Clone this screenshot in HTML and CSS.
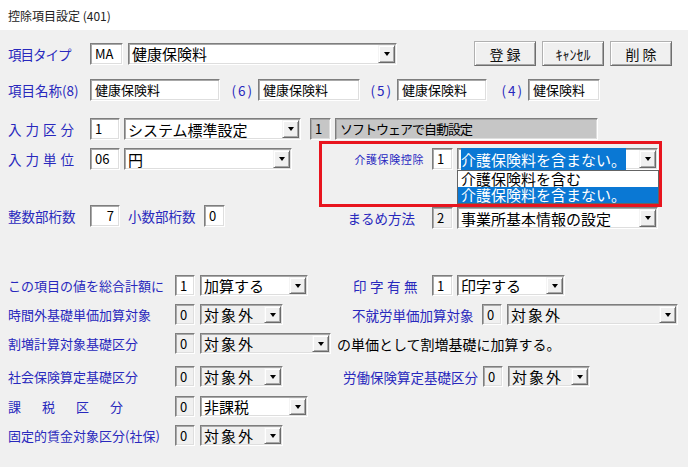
FILE: index.html
```html
<!DOCTYPE html>
<html lang="ja">
<head>
<meta charset="utf-8">
<title>控除項目設定</title>
<link rel="stylesheet" href="styles.css">
</head>
<body>
<div class="title">控除項目設定 (401)</div>
<div class="panel">

  <div class="row row-type">
    <div class="lbl head type-lbl">項目タイプ</div>
    <div class="fld code-ma">MA</div>
    <div class="combo type-combo"><span class="val">健康保険料</span><span class="arrow"></span></div>
    <div class="btns">
      <div class="btn">登 録</div>
      <div class="btn">ｷｬﾝｾﾙ</div>
      <div class="btn">削 除</div>
    </div>
  </div>

  <div class="row row-name">
    <div class="lbl head">項目名称(8)</div>
    <div class="fld name name8">健康保険料</div>
    <div class="lbl paren paren6">(6)</div>
    <div class="fld name name6">健康保険料</div>
    <div class="lbl paren paren5">(5)</div>
    <div class="fld name name5">健康保険料</div>
    <div class="lbl paren paren4">(4)</div>
    <div class="fld name name4">健保険料</div>
  </div>

  <div class="row row-input">
    <div class="lbl head spaced">入力区分</div>
    <div class="fld code">1</div>
    <div class="combo kubun-combo"><span class="val">システム標準設定</span><span class="arrow"></span></div>
    <div class="fld grey grey-code">1</div>
    <div class="fld grey grey-text">ソフトウェアで自動設定</div>
  </div>

  <div class="mid">
    <div class="mid-left">
      <div class="row row-unit">
        <div class="lbl head spaced">入力単位</div>
        <div class="fld code">06</div>
        <div class="combo unit-combo"><span class="val">円</span><span class="arrow"></span></div>
      </div>
      <div class="row row-digits">
        <div class="lbl head">整数部桁数</div>
        <div class="fld code num">7</div>
        <div class="lbl dec-lbl">小数部桁数</div>
        <div class="fld small">0</div>
      </div>
    </div>
    <div class="mid-right">
      <div class="highlight">
        <div class="row row-kaigo">
          <div class="lbl kaigo-lbl">介護保険控除</div>
          <div class="fld small">1</div>
          <div class="combo wide-combo">
            <span class="val"><span class="sel">介護保険料を含まない。</span></span><span class="arrow"></span>
            <div class="droplist">
              <div class="opt">介護保険料を含む</div>
              <div class="opt active">介護保険料を含まない。</div>
            </div>
          </div>
        </div>
      </div>
      <div class="row row-round">
        <div class="lbl round-lbl">まるめ方法</div>
        <div class="fld small off">2</div>
        <div class="combo wide-combo"><span class="val">事業所基本情報の設定</span><span class="arrow"></span></div>
      </div>
    </div>
  </div>

  <div class="row low row-total">
    <div class="lbl long">この項目の値を総合計額に</div>
    <div class="fld tiny">1</div>
    <div class="combo c108"><span class="val">加算する</span><span class="arrow"></span></div>
    <div class="lbl inji-lbl">印字有無</div>
    <div class="fld small">1</div>
    <div class="combo c108 inji-combo"><span class="val">印字する</span><span class="arrow"></span></div>
  </div>

  <div class="row low row-overtime">
    <div class="lbl long">時間外基礎単価加算対象</div>
    <div class="fld tiny off">0</div>
    <div class="combo off c83"><span class="val sp">対象外</span><span class="arrow"></span></div>
    <div class="lbl fushu-lbl">不就労単価加算対象</div>
    <div class="fld tiny off">0</div>
    <div class="combo off fushu-combo"><span class="val sp">対象外</span><span class="arrow"></span></div>
  </div>

  <div class="row low row-premium">
    <div class="lbl long">割増計算対象基礎区分</div>
    <div class="fld tiny off">0</div>
    <div class="combo off c131"><span class="val sp">対象外</span><span class="arrow"></span></div>
    <div class="note">の単価として割増基礎に加算する。</div>
  </div>

  <div class="row low row-social">
    <div class="lbl long">社会保険算定基礎区分</div>
    <div class="fld tiny off">0</div>
    <div class="combo off c83"><span class="val sp">対象外</span><span class="arrow"></span></div>
    <div class="lbl labor-lbl">労働保険算定基礎区分</div>
    <div class="fld tiny off">0</div>
    <div class="combo off labor-combo"><span class="val sp">対象外</span><span class="arrow"></span></div>
  </div>

  <div class="row low row-tax">
    <div class="lbl long tax-lbl">課税区分</div>
    <div class="fld tiny off">0</div>
    <div class="combo c108"><span class="val">非課税</span><span class="arrow"></span></div>
  </div>

  <div class="row low row-fixed">
    <div class="lbl long">固定的賃金対象区分(社保)</div>
    <div class="fld tiny off">0</div>
    <div class="combo off c83"><span class="val sp">対象外</span><span class="arrow"></span></div>
  </div>

</div>
</body>
</html>
```
FILE: styles.css
```css
* { box-sizing: border-box; }

html, body {
  margin: 0;
  padding: 0;
}

body {
  width: 688px;
  height: 467px;
  overflow: hidden;
  background: #f0f0f0;
  color: #000;
  font-family: "Noto Sans CJK JP", "Noto Sans", sans-serif;
}

.title {
  height: 30px;
  background: #fff;
  padding-left: 8px;
  font-size: 12px;
  line-height: 32px;
  color: #222;
}

.panel {
  padding: 11px 0 0 8px;
}

.row {
  display: flex;
  align-items: center;
  height: 22px;
}

.lbl {
  flex: none;
  color: #2828bd;
  font-size: 13.5px;
  line-height: 18px;
  white-space: nowrap;
}

.head { width: 82px; }
.type-lbl { letter-spacing: -1px; }
.spaced { letter-spacing: 4px; }

/* sunken edit boxes */
.fld {
  flex: none;
  height: 22px;
  display: flex;
  align-items: center;
  padding-left: 4px;
  background: #fff;
  border-top: 1px solid #7e7e7e;
  border-left: 1px solid #7e7e7e;
  border-right: 1px solid #fff;
  border-bottom: 1px solid #fff;
  box-shadow: inset 1px 1px 0 #a8a8a8, inset -1px -1px 0 #dedede;
  font-size: 13px;
  line-height: 18px;
  white-space: nowrap;
}

.fld.off { background: #f0f0f0; }
.fld.num { justify-content: flex-end; padding-right: 5px; }

.code-ma { width: 33px; }
.code { width: 30px; }
.small { width: 21px; }
.tiny { width: 20px; }

.name { font-size: 13px; }
.name8 { width: 130px; }
.name6 { width: 102px; }
.name5 { width: 90px; }
.name4 { width: 72px; }

.paren {
  text-align: right;
  padding-right: 4px;
  letter-spacing: 2px;
}
.paren6 { width: 38px; }
.paren5 { width: 37px; }
.paren4 { width: 41px; }

.grey {
  background: #c6c6c6;
  font-size: 13px;
}
.grey-code { width: 21px; margin-left: 9px; }
.grey-text { width: 263px; margin-left: 4px; letter-spacing: -1px; }

/* combo boxes */
.combo {
  flex: none;
  position: relative;
  height: 22px;
  display: flex;
  align-items: center;
  background: #fff;
  border-top: 1px solid #7e7e7e;
  border-left: 1px solid #7e7e7e;
  border-right: 1px solid #fff;
  border-bottom: 1px solid #fff;
  box-shadow: inset 1px 1px 0 #a8a8a8, inset -1px -1px 0 #dedede;
}
.combo.off { background: #f0f0f0; }

.val {
  flex: 1;
  min-width: 0;
  padding-left: 3px;
  font-size: 15px;
  line-height: 19px;
  white-space: nowrap;
}
.val.sp { letter-spacing: 2px; }

.arrow {
  flex: none;
  width: 17px;
  height: 18px;
  margin-right: 1px;
  display: flex;
  align-items: center;
  justify-content: center;
  background: #f0f0f0;
  border-top: 1px solid #f4f4f4;
  border-left: 1px solid #f4f4f4;
  border-right: 1px solid #6a6a6a;
  border-bottom: 1px solid #6a6a6a;
  box-shadow: inset 1px 1px 0 #fff, inset -1px -1px 0 #a8a8a8;
}
.arrow::after {
  content: "";
  width: 0;
  height: 0;
  border-left: 3.5px solid transparent;
  border-right: 3.5px solid transparent;
  border-top: 4px solid #000;
}

.type-combo { width: 269px; margin-left: 5px; }
.kubun-combo { width: 177px; margin-left: 4px; }
.unit-combo { width: 168px; margin-left: 4px; }
.wide-combo { width: 201px; margin-left: 4px; }
.c108 { width: 108px; margin-left: 5px; }
.c83 { width: 83px; margin-left: 5px; }
.c131 { width: 131px; margin-left: 5px; }
.inji-combo { margin-left: 4px; }
.fushu-combo { width: 171px; margin-left: 5px; }
.labor-combo { width: 82px; margin-left: 5px; }

/* buttons */
.btns {
  display: flex;
  gap: 6px;
  margin-left: 77px;
  height: 25px;
}
.btn {
  width: 62px;
  height: 25px;
  display: flex;
  align-items: center;
  justify-content: center;
  background: #f0f0f0;
  border-top: 1px solid #b0b0b0;
  border-left: 1px solid #b0b0b0;
  border-right: 1px solid #6e6e6e;
  border-bottom: 1px solid #6e6e6e;
  box-shadow: inset 1px 1px 0 #fff, inset -1px -1px 0 #a8a8a8;
  font-size: 14px;
  line-height: 18px;
  color: #111;
}

/* vertical rhythm */
.row-type { height: 25px; }
.row-name { margin-top: 13px; }
.row-input { margin-top: 17px; }

.mid {
  display: flex;
  align-items: flex-start;
}
.mid-left { width: 311px; flex: none; }
.row-unit { margin-top: 8px; }
.row-digits { margin-top: 35px; }

.dec-lbl { width: 76px; margin-left: 8px; }

.mid-right { margin-top: 1px; }

.highlight {
  width: 343px;
  height: 66px;
  border: 3px solid #e8141e;
  padding-top: 4px;
}
.kaigo-lbl {
  width: 110px;
  padding-right: 8px;
  text-align: right;
  font-size: 11px;
  letter-spacing: 0.6px;
  color: #2626c0;
}
.sel {
  background: #0a78d4;
  color: #fff;
  padding: 1px 0;
}

.droplist {
  position: absolute;
  left: -1px;
  top: 21px;
  width: 202px;
  height: 34px;
  background: #fff;
  border: 1px solid #646464;
  z-index: 2;
}
.opt {
  height: 16px;
  padding-left: 3px;
  font-size: 15px;
  line-height: 16px;
  white-space: nowrap;
}
.opt.active {
  background: #0a78d4;
  color: #fff;
}

.row-round { margin-top: 0; }
.round-lbl {
  width: 113px;
  padding-right: 17px;
  text-align: right;
}

/* lower block */
.low { height: 21px; }
.low .fld, .low .combo { height: 21px; }
.low .arrow { height: 17px; }
.long { width: 167px; font-size: 13px; }

.row-total { margin-top: 46px; }
.row-overtime { margin-top: 8px; }
.row-premium { margin-top: 8px; }
.row-social { margin-top: 12px; }
.row-tax { margin-top: 9px; }
.row-fixed { margin-top: 8px; }

.inji-lbl { width: 79px; margin-left: 45px; letter-spacing: 3.5px; }
.fushu-lbl { width: 130px; margin-left: 69px; }
.labor-lbl { width: 140px; margin-left: 60px; }
.tax-lbl { letter-spacing: 21px; }

.note {
  margin-left: 6px;
  font-size: 14px;
  line-height: 18px;
  white-space: nowrap;
}
```
